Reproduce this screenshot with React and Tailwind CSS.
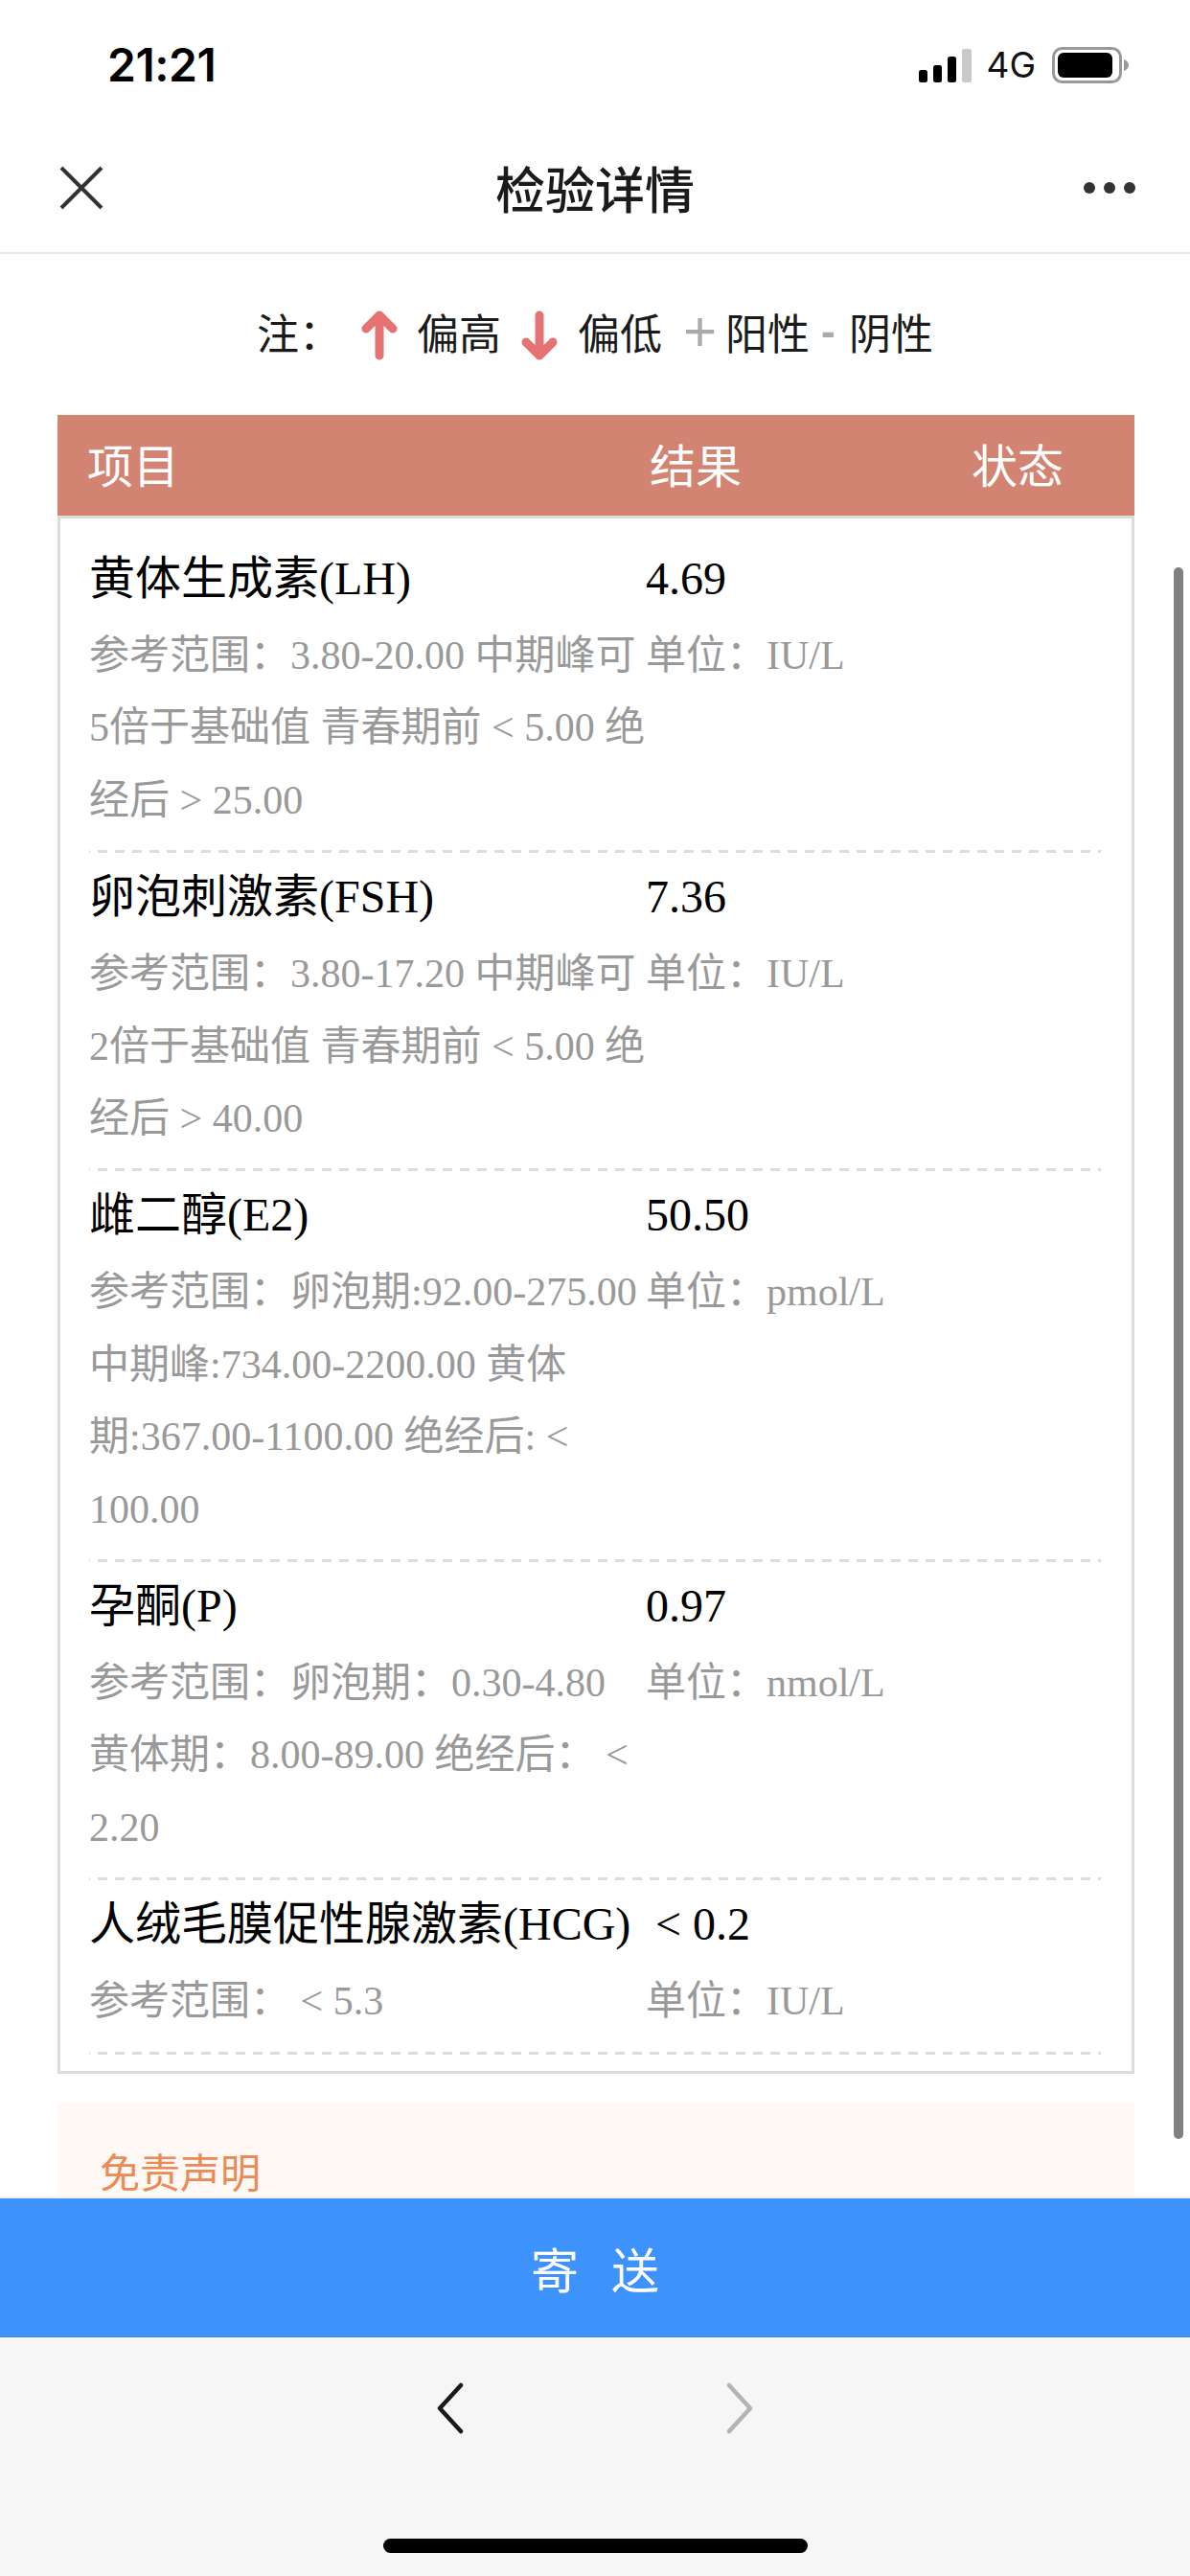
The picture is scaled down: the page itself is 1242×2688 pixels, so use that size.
const SERIF = "font-['Liberation_Serif','Noto_Sans_CJK_SC',serif]";

const rows = [
  {
    name: "黄体生成素(LH)",
    value: "4.69",
    unit: "IU/L",
    range: "参考范围：3.80-20.00 中期峰可5倍于基础值 青春期前 < 5.00 绝经后 > 25.00",
  },
  {
    name: "卵泡刺激素(FSH)",
    value: "7.36",
    unit: "IU/L",
    range: "参考范围：3.80-17.20 中期峰可2倍于基础值 青春期前 < 5.00 绝经后 > 40.00",
  },
  {
    name: "雌二醇(E2)",
    value: "50.50",
    unit: "pmol/L",
    range: "参考范围：卵泡期:92.00-275.00 中期峰:734.00-2200.00 黄体期:367.00-1100.00 绝经后: < 100.00",
  },
  {
    name: "孕酮(P)",
    value: "0.97",
    unit: "nmol/L",
    range: "参考范围：卵泡期：0.30-4.80 黄体期：8.00-89.00 绝经后： < 2.20",
  },
  {
    name: "人绒毛膜促性腺激素(HCG)",
    value: "< 0.2",
    indent: true,
    unit: "IU/L",
    range: "参考范围： < 5.3",
  },
];

function StatusBar() {
  return (
    <div className="flex h-[130px] items-center justify-between pl-[112px] pr-[64px] pt-[6px]">
      <span className="font-['Inter','Liberation_Sans',sans-serif] text-[48px] font-semibold tracking-[-0.5px] text-black">21:21</span>
      <div className="flex items-center">
        <svg width="56" height="36" viewBox="0 0 56 36">
          <rect x="1" y="23" width="9" height="13" rx="2.500" fill="#000" />
          <rect x="16" y="18" width="9" height="18" rx="2.500" fill="#000" />
          <rect x="31" y="9" width="9" height="27" rx="2.500" fill="#000" />
          <rect x="46" y="1" width="10" height="35" rx="2.500" fill="#c9c9c9" />
        </svg>
        <span className="ml-[15px] font-['Inter','Liberation_Sans',sans-serif] text-[37px] text-[#111]">4G</span>
        <svg className="ml-[17px]" width="80" height="38" viewBox="0 0 80 38">
          <rect x="1.500" y="1.500" width="70" height="35" rx="9" fill="none" stroke="#999" strokeWidth="3" />
          <rect x="6" y="6" width="57" height="26" rx="6" fill="#000" />
          <path d="M75 13c3 1 5 3.500 5 6s-2 5-5 6z" fill="#999" />
        </svg>
      </div>
    </div>
  );
}

function NavBar() {
  return (
    <div className="flex h-[135px] items-center justify-between border-b-2 border-[#e8e8e8] pl-[62px] pr-[56px] pb-[2px]">
      <svg width="46" height="46" viewBox="0 0 46 46">
        <path d="M2 2l42 42M44 2L2 44" stroke="#333" strokeWidth="4" fill="none" />
      </svg>
      <span className="ml-[4px] font-['Noto_Sans_CJK_SC',sans-serif] text-[52px] font-medium text-[#1a1a1a]">检验详情</span>
      <svg width="56" height="14" viewBox="0 0 56 14">
        <circle cx="7" cy="7" r="6" fill="#333" />
        <circle cx="28" cy="7" r="6" fill="#333" />
        <circle cx="49" cy="7" r="6" fill="#333" />
      </svg>
    </div>
  );
}

function Legend() {
  return (
    <div className="flex h-[168px] items-center justify-center pb-[6px] font-['Noto_Sans_CJK_SC',sans-serif] text-[44px] text-[#1a1a1a]">
      <span className="w-[108px]">注：</span>
      <svg className="mt-[8px] mr-[19px]" width="40" height="54" viewBox="0 0 40 54">
        <path d="M20 48V8M6 20L20 6l14 14" stroke="#e57373" strokeWidth="9" fill="none" strokeLinecap="round" strokeLinejoin="round" />
      </svg>
      <span>偏高</span>
      <svg className="mx-[20px] mt-[8px]" width="40" height="54" viewBox="0 0 40 54">
        <path d="M20 6v40M6 34l14 14 14-14" stroke="#e57373" strokeWidth="9" fill="none" strokeLinecap="round" strokeLinejoin="round" />
      </svg>
      <span>偏低</span>
      <span className="ml-[22px] w-[44px] font-['Liberation_Sans',sans-serif] text-[60px] leading-none font-light text-[#aaa]">+</span>
      <span>阳性</span>
      <span className="mx-[12px] w-[17px] font-['Liberation_Sans',sans-serif] text-[44px] leading-none font-bold text-[#aaa]">-</span>
      <span>阴性</span>
    </div>
  );
}

function ResultRow({ row }) {
  return (
    <div className={`pt-[8px] ${SERIF}`}>
      <div className="flex pb-[14px]">
        <div className="w-[581px] shrink-0">
          <div className="h-[81px] text-[48px] leading-[75px] text-black">{row.name}</div>
          <div className="text-[42px] leading-[75.4px] text-[#999]">{row.range}</div>
        </div>
        <div className="flex-1">
          <div className={`h-[81px] text-[48px] leading-[75px] text-black ${row.indent ? "pl-[10px]" : ""}`}>{row.value}</div>
          <div className="text-[42px] leading-[75.4px] text-[#999]">单位：{row.unit}</div>
        </div>
      </div>
      {/* dashes are longer than a dashed border gives */}
      <div className="h-[3px] bg-[repeating-linear-gradient(90deg,#ddd_0,#ddd_1px,transparent_1px,transparent_9px,#ddd_9px,#ddd_18px)]" />
    </div>
  );
}

export default function App() {
  return (
    <div className="flex h-[2688px] w-[1242px] flex-col overflow-hidden bg-white">
      <StatusBar />
      <NavBar />
      <div className="relative min-h-0 flex-1 overflow-hidden">
        <Legend />
        <div className="ml-[60px] mr-[58px]">
          <div className="grid h-[105px] grid-cols-[587px_336px_1fr] items-center bg-[#d28372] pb-[6px] pl-[31px] font-['Noto_Sans_CJK_SC',sans-serif] text-[48px] text-white">
            <span>项目</span>
            <span>结果</span>
            <span>状态</span>
          </div>
          <div className="border-[3px] border-[#dcdcdc] pl-[30px] pr-[32px] pt-[17px] pb-[17px]">
            {rows.map((row) => (
              <ResultRow key={row.name} row={row} />
            ))}
          </div>
          <div className="mt-[30px] bg-[#fff8f5] px-[44px] pt-[39px] pb-[60px] font-['Noto_Sans_CJK_SC',sans-serif] text-[42px] text-[#ea8a54]">
            免责声明
          </div>
        </div>
        <div className="absolute right-[7px] top-[327px] h-[1640px] w-[10px] rounded-full bg-[#808080]" />
      </div>
      <div className="flex h-[146px] items-center justify-center border-t-2 border-[#f2f2f2] bg-[#3d92fb] font-['Noto_Sans_CJK_SC',sans-serif] text-[50px] tracking-[34px] text-white">
        <span className="pl-[34px]">寄送</span>
      </div>
      <div className="relative flex h-[250px] justify-center gap-[274px] border-t border-[#3a80d8] bg-[#f6f6f6] pt-[47px]">
        <svg width="28" height="54" viewBox="0 0 28 54">
          <path d="M25 3L3 27l22 24" stroke="#1a1a1a" strokeWidth="4.500" fill="none" strokeLinecap="round" strokeLinejoin="round" />
        </svg>
        <svg width="28" height="54" viewBox="0 0 28 54">
          <path d="M3 3l22 24L3 51" stroke="#b4b4b4" strokeWidth="4.500" fill="none" strokeLinecap="round" strokeLinejoin="round" />
        </svg>
        <div className="absolute bottom-[24px] left-[400px] h-[15px] w-[443px] rounded-full bg-black" />
      </div>
    </div>
  );
}
